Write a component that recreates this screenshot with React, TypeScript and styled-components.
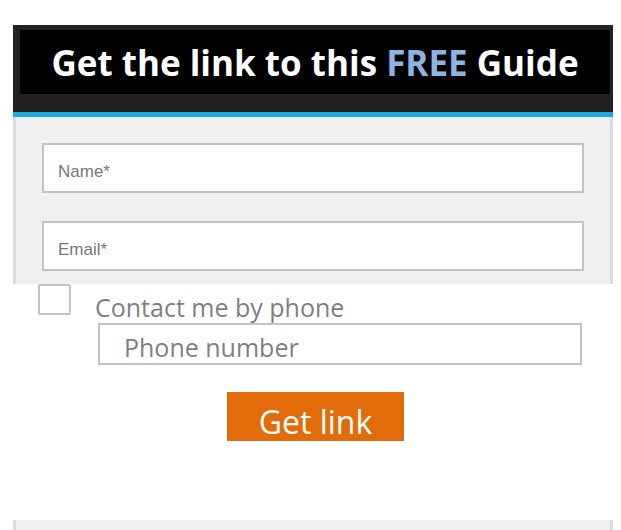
import React from "react";
import styled, { createGlobalStyle } from "styled-components";

const Global = createGlobalStyle`
  html, body { margin: 0; padding: 0; background: #ffffff; }
  body { font-family: "Open Sans", "Liberation Sans", sans-serif; }
  * { box-sizing: border-box; }
`;

const Page = styled.div`
  width: 600px;
  margin-left: 13px;
  padding-top: 25px;
  display: flex;
  flex-direction: column;
`;

const Header = styled.div`
  background: #222222;
  padding: 5px 3px 18px 7px;
`;

const TitleBar = styled.div`
  background: #000000;
  height: 64px;
  display: flex;
  align-items: center;
  justify-content: center;
  color: #ffffff;
  font-family: "Open Sans", sans-serif;
  font-weight: 700;
  font-size: 35px;
  padding-top: 1px;
`;

const Free = styled.span`
  color: #8db3e2;
`;

const Accent = styled.div`
  height: 5px;
  background: #1ca9de;
`;

const Panel = styled.div<{ $h?: number }>`
  background: #f0f0f0;
  border-left: 3px solid #dcdcdc;
  border-right: 3px solid #dcdcdc;
  padding: 26px 26px 13px;
  display: flex;
  flex-direction: column;
  gap: 28px;
  ${(p) => (p.$h ? `height: ${p.$h}px;` : "")}
`;

const Field = styled.input`
  height: 50px;
  width: 100%;
  border: 2px solid #c3c3c3;
  background: #ffffff;
  padding: 7px 14px 0;
  font-family: "Liberation Sans", Arial, sans-serif;
  font-size: 17px;
  color: #333;
  outline: none;
  &::placeholder { color: #777777; }
`;

const ContactRow = styled.div`
  display: flex;
  align-items: flex-start;
  padding-left: 25px;
`;

const Check = styled.span`
  width: 33px;
  height: 31px;
  border: 2px solid #c3c3c3;
  border-radius: 2px;
  background: #ffffff;
  flex: none;
`;

const ContactLabel = styled.label`
  margin-left: 24px;
  margin-top: 8px;
  font-family: "Open Sans", sans-serif;
  font-size: 25px;
  line-height: 31px;
  color: #7f7f7f;
`;

const PhoneField = styled.input`
  margin-left: 85px;
  width: 484px;
  height: 42px;
  border: 2px solid #c3c3c3;
  background: #ffffff;
  padding: 6px 0 0 24px;
  font-family: "Open Sans", sans-serif;
  font-size: 25px;
  color: #333;
  outline: none;
  &::placeholder { color: #7f7f7f; }
`;

const ButtonRow = styled.div`
  display: flex;
  padding-left: 214px;
  margin-top: 27px;
`;

const GetButton = styled.button`
  width: 177px;
  height: 49px;
  border: none;
  background: #e36c0a;
  color: #ffffff;
  font-family: "Open Sans", sans-serif;
  font-size: 32px;
  padding: 10px 0 0;
  line-height: 39px;
  cursor: pointer;
`;

const Footer = styled(Panel)`
  margin-top: 79px;
  padding: 0;
`;

export default function App() {
  return (
    <>
      <Global />
      <Page>
        <Header>
          <TitleBar>
            Get the link to this&nbsp;<Free>FREE</Free>&nbsp;Guide
          </TitleBar>
        </Header>
        <Accent />
        <Panel>
          <Field placeholder="Name*" />
          <Field placeholder="Email*" />
        </Panel>
        <ContactRow>
          <Check />
          <ContactLabel>Contact me by phone</ContactLabel>
        </ContactRow>
        <PhoneField placeholder="Phone number" />
        <ButtonRow>
          <GetButton>Get link</GetButton>
        </ButtonRow>
        <Footer $h={12} />
      </Page>
    </>
  );
}
